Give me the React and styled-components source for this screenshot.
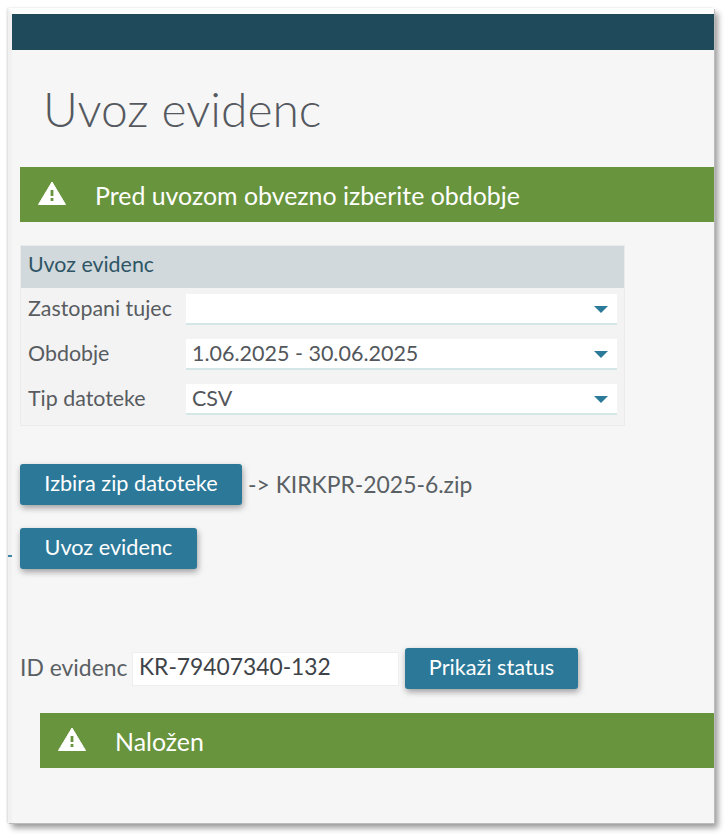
import React from "react";
import styled, { createGlobalStyle } from "styled-components";

const Global = createGlobalStyle`
  html, body { margin: 0; padding: 0; background: #fff; }
  body { font-family: Lato, "Open Sans", sans-serif; color: #5a5f64; }
`;

const Page = styled.div`
  width: 728px;
  height: 838px;
  padding: 8px 14px 15px 8px;
  box-sizing: border-box;
`;

const Frame = styled.div`
  position: relative;
  height: 100%;
  box-sizing: border-box;
  background: #f6f6f6;
  border-left: 4px solid #f1f1f1;
  border-top: 6px solid #fdfdfd;
  box-shadow: 1px 1px 0 #bbb, 4px 5px 6px rgba(0, 0, 0, 0.4), -1px 0 2px rgba(0, 0, 0, 0.12);
`;

const TopBar = styled.div`
  height: 36px;
  background: #1f4a5c;
`;

const Content = styled.div`
  padding-left: 8px;
`;

const Title = styled.h1`
  margin: 26px 0 0 23px;
  height: 91px;
  font-weight: 300;
  font-size: 48px;
  line-height: 66px;
  color: #55595f;
  letter-spacing: 0;
`;

const Banner = styled.div`
  display: flex;
  align-items: center;
  height: 55px;
  margin-left: ${(p) => p.$indent || 0}px;
  padding-left: 18px;
  background: #68943d;
  color: #fff;
  font-size: 24.9px;
`;

const BannerIcon = styled.svg`
  width: 28px;
  height: 24px;
  flex: none;
  margin-right: 29px;
  margin-top: -3px;
`;

const Panel = styled.div`
  width: 603px;
  margin: 24px 0 0 1px;
  padding-bottom: 10px;
  background: #f3f3f3;
  box-shadow: 0 0 0 1px #ebebeb;
`;

const PanelHead = styled.div`
  height: 42px;
  line-height: 37px;
  padding-left: 7px;
  background: #d1d9dc;
  color: #2e5566;
  font-size: 21.4px;
`;

const Row = styled.div`
  display: flex;
  align-items: center;
  height: 31px;
  margin-top: ${(p) => (p.$first ? 6 : 14)}px;
  padding-right: 7px;
`;

const RowLabel = styled.div`
  width: 165px;
  box-sizing: border-box;
  padding: 0 0 3px 7px;
  font-size: 21.4px;
  color: #585c61;
  white-space: nowrap;
`;

const Select = styled.div`
  flex: 1;
  height: 31px;
  display: flex;
  align-items: center;
  justify-content: space-between;
  box-sizing: border-box;
  padding: 0 9px 2px 6px;
  background: #fff;
  border-bottom: 2px solid #d5e6e6;
  font-size: 21.5px;
  color: #53575c;
`;

const Caret = styled.span`
  width: 0;
  height: 0;
  margin-top: 3px;
  border-left: 7px solid transparent;
  border-right: 7px solid transparent;
  border-top: 7px solid #2b7a99;
`;

const Actions = styled.div`
  display: flex;
  align-items: center;
  gap: 6px;
  margin-top: ${(p) => p.$top}px;
`;

const Button = styled.button`
  height: 41px;
  width: ${(p) => p.$w}px;
  padding: 0 0 3px;
  flex: none;
  border: 0;
  border-radius: 3px;
  background: #2b7898;
  color: #fff;
  font-family: Lato, sans-serif;
  font-size: 21.7px;
  box-shadow: 1px 3px 6px rgba(0, 0, 0, 0.35);
`;

const FileName = styled.span`
  font-size: 22.9px;
  color: #5a5f64;
  padding-bottom: 1px;
`;

const IdRow = styled.div`
  display: flex;
  align-items: center;
  height: 41px;
  margin-top: 79px;
`;

const IdLabel = styled.label`
  width: 113px;
  flex: none;
  padding-bottom: 4px;
  font-size: 22.9px;
  color: #5a5f64;
`;

const IdInput = styled.div`
  width: 265px;
  height: 32px;
  line-height: 27px;
  margin: 1px 7px 0 0;
  box-sizing: border-box;
  padding-left: 6px;
  background: #fff;
  box-shadow: 0 0 0 1px #eeeeee;
  font-size: 22.8px;
  color: #3e4348;
`;

const BannerGap = styled.div`
  height: 24px;
`;

const Tick = styled.span`
  position: absolute;
  left: -4px;
  top: 541px;
  width: 4px;
  height: 2px;
  background: #3f86a8;
`;

const WarnIcon = () => (
  <BannerIcon viewBox="0 0 28 24">
    <path d="M14 1 L27.5 23.5 H0.5 Z" fill="#fff" stroke="#fff" strokeLinejoin="round" />
    <rect x="12.6" y="9" width="2.8" height="6" fill="#68943d" />
    <rect x="12.6" y="17" width="2.8" height="3" fill="#68943d" />
  </BannerIcon>
);

export default function App() {
  return (
    <Page>
      <Global />
      <Frame>
        <Tick />
        <TopBar />
        <Content>
          <Title>Uvoz evidenc</Title>
          <Banner>
            <WarnIcon />
            Pred uvozom obvezno izberite obdobje
          </Banner>
          <Panel>
            <PanelHead>Uvoz evidenc</PanelHead>
            <Row $first>
              <RowLabel>Zastopani tujec</RowLabel>
              <Select>
                <span />
                <Caret />
              </Select>
            </Row>
            <Row>
              <RowLabel>Obdobje</RowLabel>
              <Select>
                1.06.2025 - 30.06.2025
                <Caret />
              </Select>
            </Row>
            <Row>
              <RowLabel>Tip datoteke</RowLabel>
              <Select>
                CSV
                <Caret />
              </Select>
            </Row>
          </Panel>
          <Actions $top={39}>
            <Button $w={222}>Izbira zip datoteke</Button>
            <FileName>-&gt; KIRKPR-2025-6.zip</FileName>
          </Actions>
          <Actions $top={23}>
            <Button $w={177}>Uvoz evidenc</Button>
          </Actions>
          <IdRow>
            <IdLabel>ID evidenc</IdLabel>
            <IdInput>KR-79407340-132</IdInput>
            <Button $w={173}>Prikaži status</Button>
          </IdRow>
          <BannerGap />
          <Banner $indent={20}>
            <WarnIcon />
            Naložen
          </Banner>
        </Content>
      </Frame>
    </Page>
  );
}
